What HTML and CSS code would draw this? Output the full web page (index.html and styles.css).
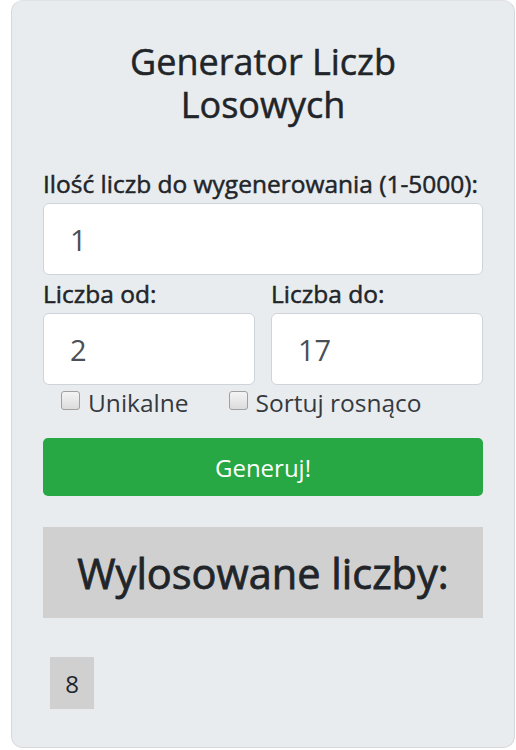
FILE: index.html
```html
<!DOCTYPE html>
<html lang="pl">
<head>
    <meta charset="UTF-8">
    <meta name="viewport" content="width=device-width, initial-scale=1.0">
    <title>Generator Liczb Losowych</title>
    <link rel="stylesheet" href="styles.css">
</head>
<body>
    <div class="generator-container">
        <h2>Generator Liczb Losowych</h2>
        <label for="count">Ilość liczb do wygenerowania (1-5000):</label>
        <input type="text" id="count" value="1">
        <div class="range-row">
            <div class="range-field">
                <label for="from">Liczba od:</label>
                <input type="text" id="from" value="2">
            </div>
            <div class="range-field">
                <label for="to">Liczba do:</label>
                <input type="text" id="to" value="17">
            </div>
        </div>
        <div class="options">
            <label class="check"><input type="checkbox" id="unique"> Unikalne</label>
            <label class="check"><input type="checkbox" id="sort"> Sortuj rosnąco</label>
        </div>
        <button class="btn" onclick="generate()">Generuj!</button>
        <div class="results-header">
            <h3>Wylosowane liczby:</h3>
        </div>
        <div class="results" id="results">
            <span class="number">8</span>
        </div>
    </div>

    <script>
        function generate() {
            const count = parseInt(document.getElementById('count').value, 10);
            const from = parseInt(document.getElementById('from').value, 10);
            const to = parseInt(document.getElementById('to').value, 10);
            const unique = document.getElementById('unique').checked;
            const sort = document.getElementById('sort').checked;

            if (isNaN(count) || count < 1 || count > 5000 || isNaN(from) || isNaN(to) || from > to) {
                alert('Podaj poprawne wartości.');
                return;
            }
            if (unique && count > to - from + 1) {
                alert('Za mało liczb w zakresie.');
                return;
            }

            const numbers = [];
            while (numbers.length < count) {
                const n = Math.floor(Math.random() * (to - from + 1)) + from;
                if (unique && numbers.includes(n)) continue;
                numbers.push(n);
            }
            if (sort) numbers.sort((a, b) => a - b);

            const results = document.getElementById('results');
            results.innerHTML = '';
            numbers.forEach(n => {
                const span = document.createElement('span');
                span.className = 'number';
                span.textContent = n;
                results.appendChild(span);
            });
        }
    </script>
</body>
</html>
```

FILE: styles.css
```css
body {
    font-family: "Open Sans", "Liberation Sans", sans-serif;
    margin: 0;
    background-color: #fff;
    color: #212529;
}
.generator-container {
    margin: 0 1px 0 11px;
    height: 748px;
    box-sizing: border-box;
    padding: 39px 31px 30px;
    background-color: #e9ecef;
    border: 1px solid #d6d9dc;
    border-top-color: #e0e2e5;
    border-radius: 12px;
}
/* medium weight look for headings and labels */
h2,
label {
    -webkit-text-stroke: 0.5px currentColor;
}
h2 {
    margin: 0 20px 42px;
    font-size: 36px;
    font-weight: 400;
    line-height: 43px;
    text-align: center;
}
label {
    display: block;
    font-size: 24.5px;
    font-weight: 400;
    line-height: 32px;
    margin-bottom: 3px;
}
input[type="text"] {
    display: block;
    width: 100%;
    box-sizing: border-box;
    height: 72px;
    padding: 0 26px;
    font-family: inherit;
    font-size: 29px;
    color: #495057;
    background-color: #fff;
    border: 1px solid #ced4da;
    border-radius: 6px;
}
input[type="text"]:focus {
    border-color: #80bdff;
    outline: none;
}
.range-row {
    display: flex;
    gap: 16px;
    margin-top: 3px;
}
.range-field {
    flex: 1;
}
.options {
    display: flex;
    gap: 40px;
    padding-left: 18px;
    margin-top: 2px;
}
.check {
    display: flex;
    align-items: center;
    gap: 8px;
    font-size: 24.5px;
    color: #343a40;
    margin: 0;
    -webkit-text-stroke: 0;
}
.check input {
    appearance: none;
    width: 19px;
    height: 19px;
    margin: 0;
    border: 1px solid #a0a0a0;
    border-radius: 3px;
    background: linear-gradient(#f4f4f4, #dcdcdc);
    position: relative;
    top: -3px;
}
.check input:checked {
    background: #3b82f6;
    border-color: #3b82f6;
}
.btn {
    display: block;
    width: 100%;
    height: 58px;
    margin-top: 19px;
    font-family: inherit;
    font-size: 24px;
    color: #fff;
    background-color: #28a745;
    border: none;
    border-radius: 5px;
    cursor: pointer;
}
.btn:hover {
    background-color: #218838;
}
.results-header {
    margin-top: 31px;
    height: 91px;
    display: flex;
    align-items: center;
    justify-content: center;
    background-color: #d0d0d0;
}
.results-header h3 {
    margin: 0;
    font-size: 41.5px;
    font-weight: 400;
    -webkit-text-stroke: 0.8px currentColor;
}
.results {
    display: flex;
    flex-wrap: wrap;
    gap: 8px;
    margin-top: 39px;
    padding-left: 7px;
}
.number {
    width: 44px;
    height: 52px;
    display: flex;
    align-items: center;
    justify-content: center;
    font-size: 24px;
    background-color: #d0d0d0;
}
```
